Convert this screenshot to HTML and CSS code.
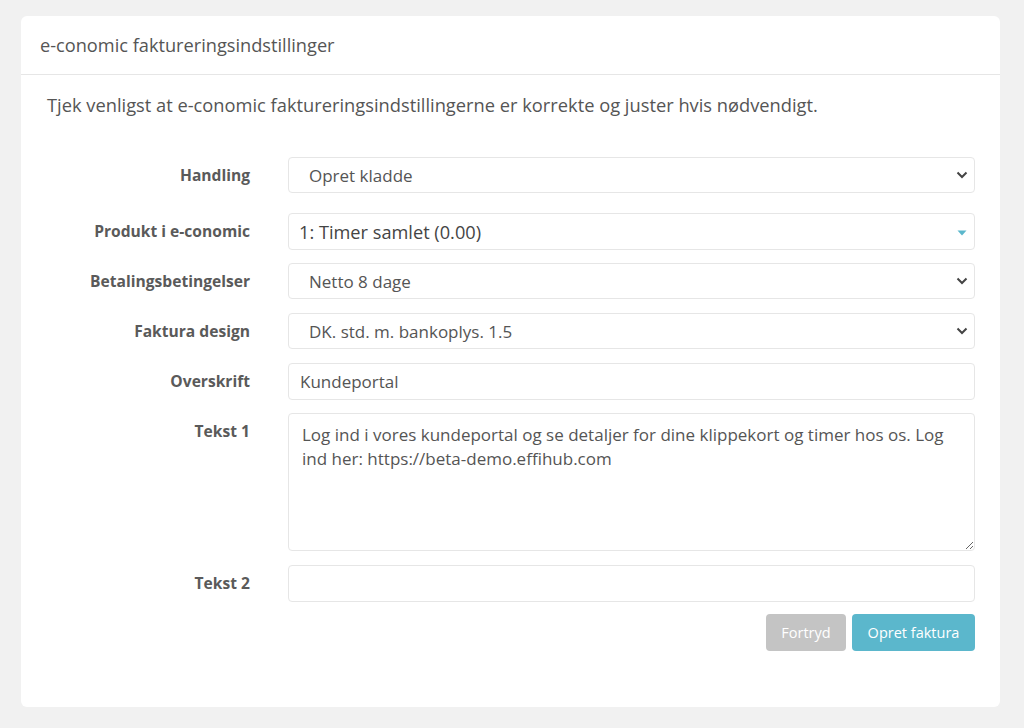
FILE: index.html
```html
<!DOCTYPE html>
<html lang="da">
<head>
<meta charset="utf-8">
<title>e-conomic faktureringsindstillinger</title>
<link rel="stylesheet" href="styles.css">
</head>
<body>
<div class="card">
  <div class="card-header">e-conomic faktureringsindstillinger</div>
  <div class="card-body">
    <p class="intro">Tjek venligst at e-conomic faktureringsindstillingerne er korrekte og juster hvis nødvendigt.</p>
    <form class="form">
      <div class="row row-first">
        <label class="label">Handling</label>
        <div class="control select">
          <span>Opret kladde</span>
          <svg class="chev" width="12" height="8" viewBox="0 0 12 8"><path d="M1.5 1.5 L6 6 L10.5 1.5" fill="none" stroke="#444" stroke-width="2"/></svg>
        </div>
      </div>
      <div class="row">
        <label class="label">Produkt i e-conomic</label>
        <div class="control select2">
          <span>1: Timer samlet (0.00)</span>
          <svg class="tri" width="10" height="6" viewBox="0 0 10 6"><path d="M0.5 0.5 L9.5 0.5 L5 5.5 Z" fill="#5bb7cc"/></svg>
        </div>
      </div>
      <div class="row">
        <label class="label">Betalingsbetingelser</label>
        <div class="control select">
          <span>Netto 8 dage</span>
          <svg class="chev" width="12" height="8" viewBox="0 0 12 8"><path d="M1.5 1.5 L6 6 L10.5 1.5" fill="none" stroke="#444" stroke-width="2"/></svg>
        </div>
      </div>
      <div class="row">
        <label class="label">Faktura design</label>
        <div class="control select">
          <span>DK. std. m. bankoplys. 1.5</span>
          <svg class="chev" width="12" height="8" viewBox="0 0 12 8"><path d="M1.5 1.5 L6 6 L10.5 1.5" fill="none" stroke="#444" stroke-width="2"/></svg>
        </div>
      </div>
      <div class="row">
        <label class="label">Overskrift</label>
        <input class="control input" type="text" value="Kundeportal">
      </div>
      <div class="row row-text1">
        <label class="label">Tekst 1</label>
        <textarea class="control textarea">Log ind i vores kundeportal og se detaljer for dine klippekort og timer hos os. Log ind her: https://beta-demo.effihub.com</textarea>
      </div>
      <div class="row row-text2">
        <label class="label">Tekst 2</label>
        <input class="control input" type="text" value="">
      </div>
      <div class="actions">
        <button type="button" class="btn btn-cancel">Fortryd</button>
        <button type="button" class="btn btn-primary">Opret faktura</button>
      </div>
    </form>
  </div>
</div>
</body>
</html>
```

FILE: styles.css
```css
* { box-sizing: border-box; }

html, body {
  margin: 0;
  padding: 0;
  background: #f1f1f1;
  font-family: "Open Sans", "Noto Sans", sans-serif;
  color: #555;
}

body {
  padding: 16px 24px 20px 21px;
}

.card {
  background: #fff;
  border-radius: 6px;
  height: 691px;
}

.card-header {
  height: 59px;
  padding: 0 19px;
  display: flex;
  align-items: center;
  font-size: 18.2px;
  color: #555;
  border-bottom: 1px solid #e6e6e6;
}

.card-body {
  padding: 17px 25px 0 25px;
}

.intro {
  margin: 0 0 39px 1px;
  font-size: 18.3px;
  line-height: 26px;
  color: #555;
}

.form {
  display: flex;
  flex-direction: column;
}

.row {
  display: grid;
  grid-template-columns: 204px 1fr;
  column-gap: 38px;
  align-items: start;
  margin-bottom: 13px;
}

.row-first {
  margin-bottom: 19px;
}

.row-text1 {
  margin-bottom: 14px;
}

.row-text2 {
  margin-bottom: 12px;
}

.label {
  text-align: right;
  font-weight: 700;
  font-size: 15.6px;
  line-height: 37px;
  color: #5a5a5a;
}

.control {
  height: 37px;
  border: 1px solid #e6e6e6;
  border-radius: 4px;
  background: #fff;
  font-family: "Open Sans", "Noto Sans", sans-serif;
  font-size: 17px;
  color: #555;
}

.select {
  display: flex;
  align-items: center;
  justify-content: space-between;
  padding: 0 6px 0 20px;
  height: 36px;
}

.select2 {
  display: flex;
  align-items: center;
  justify-content: space-between;
  padding: 0 7px 0 10px;
  color: #444;
  font-size: 18.2px;
}

.tri { margin-top: 2px; }

.input {
  width: 100%;
  padding: 0 11px;
  outline: none;
}

.textarea {
  width: 100%;
  height: 138px;
  padding: 9px 13px;
  line-height: 24px;
  resize: vertical;
  outline: none;
}

.actions {
  display: flex;
  justify-content: flex-end;
  gap: 6px;
}

.btn {
  height: 37px;
  border: none;
  border-radius: 4px;
  color: #fff;
  font-family: "Open Sans", "Noto Sans", sans-serif;
  font-size: 14.5px;
  padding: 0 10px;
}

.btn-cancel {
  background: #c4c4c4;
  width: 80px;
}

.btn-primary {
  background: #5bb7cc;
  width: 123px;
}
```
